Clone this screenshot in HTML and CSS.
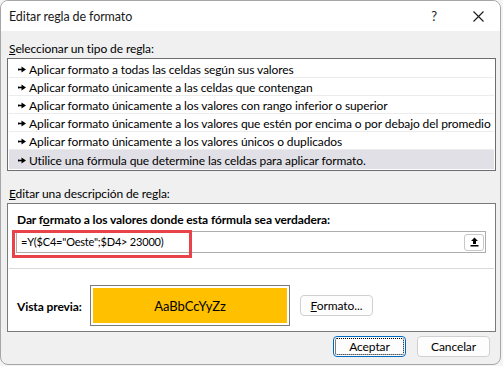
FILE: index.html
```html
<!DOCTYPE html>
<html lang="es">
<head>
    <meta charset="UTF-8">
    <title>Editar regla de formato</title>
    <link rel="stylesheet" href="styles.css">
</head>
<body>
    <div class="dialog">
        <div class="titlebar">
            <span class="title">Editar regla de formato</span>
            <span class="help">?</span>
            <span class="close">
                <svg width="11" height="11" viewBox="0 0 11 11"><path d="M0.5 0.5L10.5 10.5M10.5 0.5L0.5 10.5" stroke="#1a1a1a" stroke-width="1.1"/></svg>
            </span>
        </div>

        <div class="content">
            <div class="label"><u>S</u>eleccionar un tipo de regla:</div>
            <ul class="rules">
                <li><svg class="bullet" width="8" height="7" viewBox="0 0 8 7"><path d="M0.5 2.5v2M0 3.5h4" stroke="#000" stroke-width="1.4"/><path d="M3.5 0.5L8 3.5L3.5 6.5z"/></svg>Aplicar formato a todas las celdas según sus valores</li>
                <li><svg class="bullet" width="8" height="7" viewBox="0 0 8 7"><path d="M0.5 2.5v2M0 3.5h4" stroke="#000" stroke-width="1.4"/><path d="M3.5 0.5L8 3.5L3.5 6.5z"/></svg>Aplicar formato únicamente a las celdas que contengan</li>
                <li><svg class="bullet" width="8" height="7" viewBox="0 0 8 7"><path d="M0.5 2.5v2M0 3.5h4" stroke="#000" stroke-width="1.4"/><path d="M3.5 0.5L8 3.5L3.5 6.5z"/></svg>Aplicar formato únicamente a los valores con rango inferior o superior</li>
                <li><svg class="bullet" width="8" height="7" viewBox="0 0 8 7"><path d="M0.5 2.5v2M0 3.5h4" stroke="#000" stroke-width="1.4"/><path d="M3.5 0.5L8 3.5L3.5 6.5z"/></svg>Aplicar formato únicamente a los valores que estén por encima o por debajo del promedio</li>
                <li><svg class="bullet" width="8" height="7" viewBox="0 0 8 7"><path d="M0.5 2.5v2M0 3.5h4" stroke="#000" stroke-width="1.4"/><path d="M3.5 0.5L8 3.5L3.5 6.5z"/></svg>Aplicar formato únicamente a los valores únicos o duplicados</li>
                <li class="selected"><svg class="bullet" width="8" height="7" viewBox="0 0 8 7"><path d="M0.5 2.5v2M0 3.5h4" stroke="#000" stroke-width="1.4"/><path d="M3.5 0.5L8 3.5L3.5 6.5z"/></svg>Utilice una fórmula que determine las celdas para aplicar formato.</li>
            </ul>

            <div class="label label-desc"><u>E</u>ditar una descripción de regla:</div>
            <div class="panel">
                <div class="panel-title">Dar f<u>o</u>rmato a los valores donde esta fórmula sea verdadera:</div>
                <div class="formula">
                    <span class="formula-text">=Y($C4="Oeste";$D4&gt; 23000)</span>
                    <button class="collapse">
                        <svg width="9" height="10" viewBox="0 0 9 10"><path d="M4.5 0.5L8 4H6V7H3V4H1z"/><rect x="0.5" y="8" width="8" height="1.5"/></svg>
                    </button>
                    <span class="highlight"></span>
                </div>
                <div class="separator"></div>
                <div class="preview-row">
                    <span class="preview-label">Vista previa:</span>
                    <div class="preview"><div class="swatch">AaBbCcYyZz</div></div>
                    <button class="btn btn-format"><u>F</u>ormato...</button>
                </div>
            </div>

            <div class="actions">
                <button class="btn btn-default">Aceptar</button>
                <button class="btn">Cancelar</button>
            </div>
        </div>
    </div>
</body>
</html>
```

FILE: styles.css
```css
body {
    margin: 0;
    background-color: #f4f4f4;
    font-family: Lato, "Liberation Sans", Arial, sans-serif;
    font-size: 12px;
    letter-spacing: -0.1px;
    color: #000;
}
.dialog {
    width: 501px;
    height: 365px;
    box-sizing: border-box;
    border: 1px solid #a6a6a6;
    border-radius: 8px;
    overflow: hidden;
    background-color: #f0f0f0;
}
.titlebar {
    height: 30px;
    display: flex;
    align-items: center;
    background-color: #fff;
    color: #1a1a1a;
}
.title {
    flex: 1;
    padding-left: 8px;
    padding-top: 1px;
    font-size: 12.5px;
}
.help {
    font-size: 13px;
    width: 20px;
    text-align: center;
    margin-right: 29px;
}
.close {
    display: flex;
    margin-right: 16px;
}
.content {
    padding: 10px 4px 0 6px;
}
.label {
    line-height: 15px;
    padding-left: 2px;
}
.rules {
    list-style: none;
    margin: 2px 0 0 0;
    padding: 1px;
    width: 489px;
    box-sizing: border-box;
    border: 1px solid #6d6d6d;
    background-color: #fff;
}
.rules li {
    display: flex;
    align-items: center;
    height: 18px;
    padding-top: 2px;
    box-sizing: border-box;
    line-height: 15px;
    border-bottom: 1px solid #ececec;
    white-space: nowrap;
}
.rules li.selected {
    background-color: #e0e0e6;
    border-bottom: none;
    height: 19px;
}
.bullet {
    margin: 0 3px 0 9px;
    flex-shrink: 0;
}
.label-desc {
    margin-top: 15px;
}
.panel {
    margin-top: 2px;
    width: 489px;
    box-sizing: border-box;
    border: 1px solid #7a7a7a;
    background-color: #fff;
    padding: 8px 9px 5px 8px;
}
.panel-title {
    font-weight: bold;
    line-height: 15px;
    padding-left: 1px;
}
.formula {
    position: relative;
    margin-top: 4px;
    height: 22px;
    box-sizing: border-box;
    border: 1px solid #adadad;
    display: flex;
    align-items: center;
}
.formula-text {
    flex: 1;
    padding-left: 4px;
    font-size: 11px;
    letter-spacing: -0.2px;
    line-height: 20px;
}
.collapse {
    width: 20px;
    height: 17px;
    margin-right: 1px;
    padding: 0;
    display: flex;
    align-items: center;
    justify-content: center;
    background-color: #fff;
    border: 1px solid #c8c8c8;
    border-radius: 3px;
}
.highlight {
    position: absolute;
    left: -5px;
    top: -2px;
    width: 180px;
    height: 28px;
    box-sizing: border-box;
    border: 3px solid #e8434b;
}
.separator {
    height: 1px;
    margin: 15px -8px 0 -7px;
    background-color: #d9d9d9;
}
.preview-row {
    display: flex;
    align-items: center;
    margin-top: 16px;
}
.preview-label {
    width: 73px;
    padding: 1px 0 0 1px;
    font-weight: bold;
}
.preview {
    width: 200px;
    height: 41px;
    box-sizing: border-box;
    border: 1px solid #7a7a7a;
    padding: 2px;
}
.swatch {
    height: 100%;
    background-color: #ffc000;
    display: flex;
    align-items: center;
    justify-content: center;
    font-size: 13px;
    letter-spacing: 0;
    padding-top: 1px;
    box-sizing: border-box;
}
.btn {
    height: 21px;
    padding: 0;
    font-family: inherit;
    font-size: 12px;
    letter-spacing: inherit;
    color: #000;
    background-color: #fdfdfd;
    border: 1px solid #d0d0d0;
    border-radius: 4px;
}
.btn-format {
    width: 73px;
    margin-left: 10px;
}
.actions {
    display: flex;
    justify-content: flex-end;
    gap: 11px;
    margin-top: 4px;
    padding-right: 6px;
}
.actions .btn {
    width: 73px;
}
.btn-default {
    border-color: #0067c0;
    outline: 1px dotted #000;
    outline-offset: -3px;
}
```
